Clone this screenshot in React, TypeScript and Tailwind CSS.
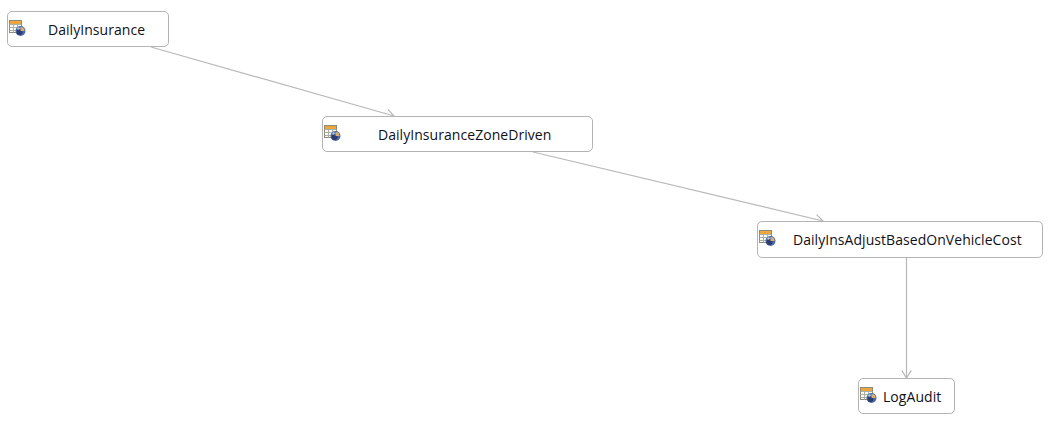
import React from 'react';

// table + globe glyph used on every node
const TableIcon = () => (
  <svg width="17" height="17" viewBox="0 0 17 17" className="block">
    <rect x="0.5" y="0.5" width="12" height="12" fill="#fbfbf4" stroke="#8f8a78" />
    <rect x="1" y="1" width="11" height="3" fill="#eaa640" />
    <path d="M0.5 4.5H12.5M0.5 7.5H12.5M0.5 10.5H12.5M4.5 4.5V12.5M8.5 4.5V12.5" stroke="#a8b0a8" strokeWidth="1" fill="none" />
    <circle cx="11.5" cy="11" r="5" fill="#4a6cae" />
    <circle cx="10.5" cy="12" r="3" fill="#2c3c6c" />
    <path d="M11.5 7A4 4 0 0 1 15.5 11H11.5Z" fill="#dcae6c" />
    <circle cx="9.5" cy="8.5" r="1.2" fill="#b4c6e6" />
  </svg>
);

type NodeProps = {
  label: string;
  left: number;
  top: number;
  width: number;
  height: number;
  textLeft: number;
};

const nodes: NodeProps[] = [
  { label: 'DailyInsurance', left: 7, top: 11, width: 162, height: 36, textLeft: 40 },
  { label: 'DailyInsuranceZoneDriven', left: 322, top: 116, width: 271, height: 36, textLeft: 55 },
  { label: 'DailyInsAdjustBasedOnVehicleCost', left: 757, top: 221, width: 286, height: 37, textLeft: 35 },
  { label: 'LogAudit', left: 858, top: 378, width: 97, height: 36, textLeft: 24 },
];

const edges = [
  { x1: 151, y1: 47, x2: 394, y2: 116 },
  { x1: 533, y1: 152, x2: 823, y2: 221 },
  { x1: 906.5, y1: 258, x2: 906.5, y2: 378 },
];

// arrow head drawn as two open barbs at the end of each edge
const barbs = (e: { x1: number; y1: number; x2: number; y2: number }) => {
  const a = Math.atan2(e.y2 - e.y1, e.x2 - e.x1);
  const len = 9;
  const spread = 0.55;
  const p = (s: number) =>
    `${e.x2 - len * Math.cos(a + s)},${e.y2 - len * Math.sin(a + s)}`;
  return `${p(spread)} ${e.x2},${e.y2} ${p(-spread)}`;
};

export default function App() {
  return (
    <div className="relative w-[1053px] h-[443px] bg-white overflow-hidden font-['Open_Sans','Noto_Sans',sans-serif]">
      <svg width="1053" height="443" className="absolute left-0 top-0">
        {edges.map((e, i) => (
          <g key={i} stroke="#b8b8b8" strokeWidth="1.2" fill="none">
            <line x1={e.x1} y1={e.y1} x2={e.x2} y2={e.y2} />
            <polyline points={barbs(e)} />
          </g>
        ))}
      </svg>

      {nodes.map((n) => (
        <div
          key={n.label}
          className="absolute box-border bg-white border border-[#b4b4b4] rounded-[5px]"
          style={{ left: n.left, top: n.top, width: n.width, height: n.height }}
        >
          <div className="absolute left-[1px] top-[8px]">
            <TableIcon />
          </div>
          <span
            className="absolute top-[8px] text-[14px] leading-[20px] tracking-[0.05px] text-[#101018] whitespace-nowrap"
            style={{ left: n.textLeft }}
          >
            {n.label}
          </span>
        </div>
      ))}
    </div>
  );
}
